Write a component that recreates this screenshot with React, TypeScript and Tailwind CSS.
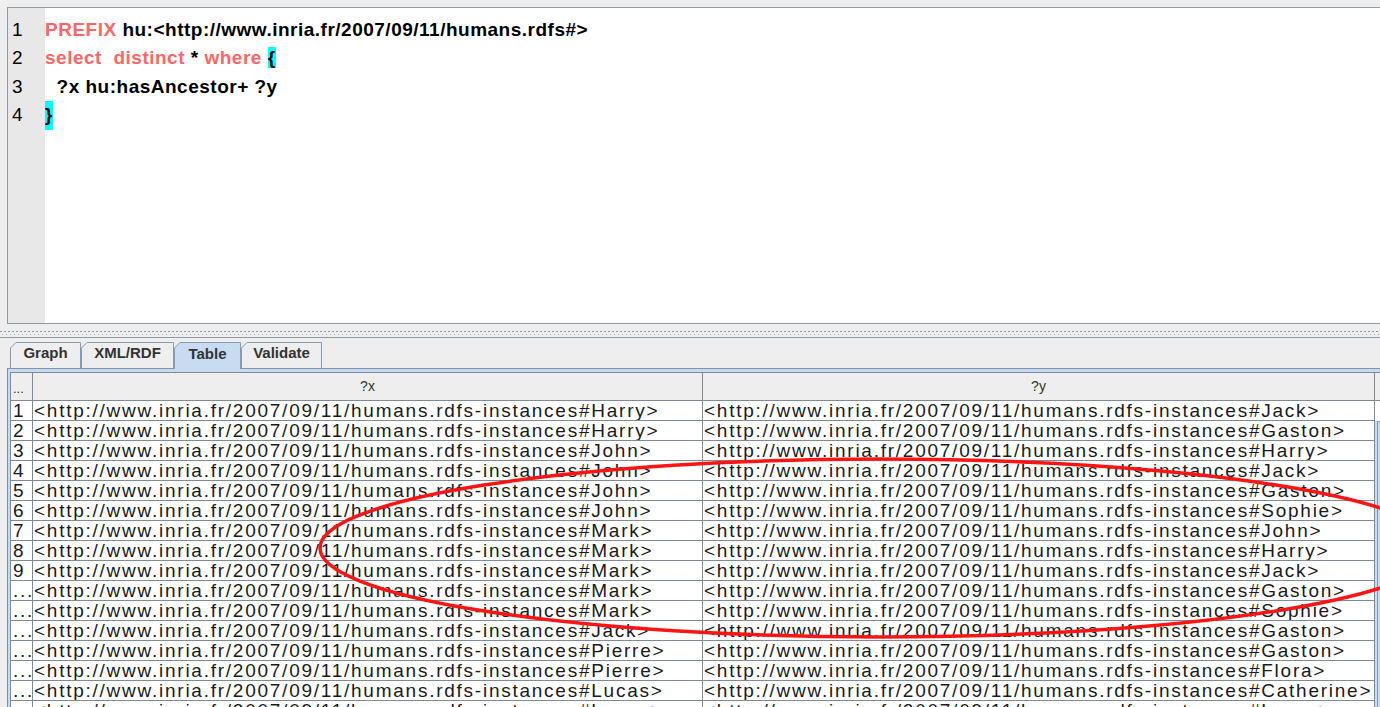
import React from "react";

const rows: [string, string][] = [
  ["Harry", "Jack"],
  ["Harry", "Gaston"],
  ["John", "Harry"],
  ["John", "Jack"],
  ["John", "Gaston"],
  ["John", "Sophie"],
  ["Mark", "John"],
  ["Mark", "Harry"],
  ["Mark", "Jack"],
  ["Mark", "Gaston"],
  ["Mark", "Sophie"],
  ["Jack", "Gaston"],
  ["Pierre", "Gaston"],
  ["Pierre", "Flora"],
  ["Lucas", "Catherine"],
  ["Lucas", "Laura"],
];

const base = "<http://www.inria.fr/2007/09/11/humans.rdfs-instances#";

function Tab({ label, width, active }: { label: string; width: number; active?: boolean }) {
  const h = active ? 27 : 26;
  return (
    <div
      className={`relative flex items-center justify-center pb-[3px] ${active ? "z-10 -mb-[1px]" : ""}`}
      style={{ width, height: h }}
    >
      <svg className="absolute inset-0" width={width} height={h}>
        <path
          d={`M0.5 ${h} L0.5 6 L6 0.5 L${width - 0.5} 0.5 L${width - 0.5} ${h}`}
          fill={active ? "#c8dcf1" : "#eeeeee"}
          stroke="#8a9bb0"
          strokeWidth="1"
        />
        {active && <rect x="1" y={h - 2} width={width - 2} height="2" fill="#c8dcf1" />}
      </svg>
      <span className="relative text-[15px] font-bold text-[#333333]">{label}</span>
    </div>
  );
}

export default function App() {
  return (
    <div className="relative w-[1380px] h-[707px] overflow-hidden bg-[#eeeeee] font-['Liberation_Sans',Arial,sans-serif]">
      {/* Query editor */}
      <div className="pt-[7px] pl-[7px]">
        <div className="h-[317px] flex bg-white border-t border-l border-b border-[#8e99a5]">
          <div className="w-[37px] bg-[#e8e8e8] pl-[4px] pt-[8px] text-[19px] leading-[28.4px] text-black">
            <div>1</div>
            <div>2</div>
            <div>3</div>
            <div>4</div>
          </div>
          <div className="pt-[8px] text-[19px] leading-[28.4px] font-bold tracking-[0.5px] text-black whitespace-pre">
            <div>
              <span className="text-[#ff6666]">PREFIX</span> hu:&lt;http://www.inria.fr/2007/09/11/humans.rdfs#&gt;
            </div>
            <div>
              <span className="text-[#ff6666]">select  distinct</span> * <span className="text-[#ff6666]">where</span>{" "}
              <span className="bg-[#00ffff]">{"{"}</span>
            </div>
            <div>  ?x hu:hasAncestor+ ?y</div>
            <div>
              <span className="inline-block bg-[#00ffff] leading-[28.4px]">{"}"}</span>
            </div>
          </div>
        </div>
      </div>

      {/* Splitter */}
      <div className="h-[14px] pt-[7px] border-b border-[#8e99a5]">
        <div className="h-[1px] bg-[repeating-linear-gradient(90deg,#8d9bab_0px,#8d9bab_2px,transparent_2px,transparent_4px)]" />
        <div className="h-[1px] mt-[2px] bg-[repeating-linear-gradient(90deg,transparent_0px,transparent_2px,#9fb0c4_2px,#9fb0c4_3px,transparent_3px,transparent_4px)]" />
      </div>

      {/* Tabs */}
      <div className="h-[30px] flex items-end pl-[10px]">
        <Tab label="Graph" width={71} />
        <Tab label="XML/RDF" width={93} />
        <Tab label="Table" width={67} active />
        <Tab label="Validate" width={81} />
      </div>

      {/* Result table */}
      <div className="ml-[7px] border-l border-t border-[#7f93ad] bg-[#c8daf0] pl-[2px] pt-[3px]">
        <div className="flex">
          <div className="w-[1365px] border-l border-t border-[#7d8b99] bg-white">
            <div className="h-[28px] flex bg-[#eeeeee] border-b border-[#7d8b99] text-[14px] text-[#333333] leading-[27px]">
              <div className="w-[22px] border-r border-[#7d8b99] pl-[2px] pt-[2px] text-[13px]">...</div>
              <div className="w-[670px] border-r border-[#7d8b99] text-center">?x</div>
              <div className="w-[672px] border-r border-[#7d8b99] text-center">?y</div>
            </div>
            {rows.map(([x, y], i) => (
              <div
                key={i}
                className="h-[20px] flex border-b border-[#7d8b99] text-[19px] leading-[19px] tracking-[1.75px] text-[#1a1a1a] whitespace-nowrap overflow-hidden"
              >
                <div className="w-[22px] border-r border-[#7d8b99] pl-[2px] overflow-hidden">
                  {i < 9 ? i + 1 : "..."}
                </div>
                <div className="w-[670px] border-r border-[#7d8b99] pl-[1px] overflow-hidden">
                  {base}
                  {x}&gt;
                </div>
                <div className="w-[672px] border-r border-[#7d8b99] pl-[1px] overflow-hidden">
                  {base}
                  {y}&gt;
                </div>
              </div>
            ))}
          </div>
          <div className="w-[5px]">
            <div className="h-[29px] border-t border-b border-[#7d8b99] bg-[#eeeeee]" />
            <div className="h-[20px] bg-white" />
            <div className="h-[400px] ml-[2px] border-l border-t border-[#8a9bb0] bg-[#c5d8ee]" />
          </div>
        </div>
      </div>

      {/* Hand-drawn highlight */}
      <svg className="absolute inset-0 pointer-events-none" width="1380" height="707">
        <ellipse cx="880" cy="548" rx="560" ry="89" fill="none" stroke="#ff1414" strokeWidth="3.5" />
      </svg>
    </div>
  );
}
